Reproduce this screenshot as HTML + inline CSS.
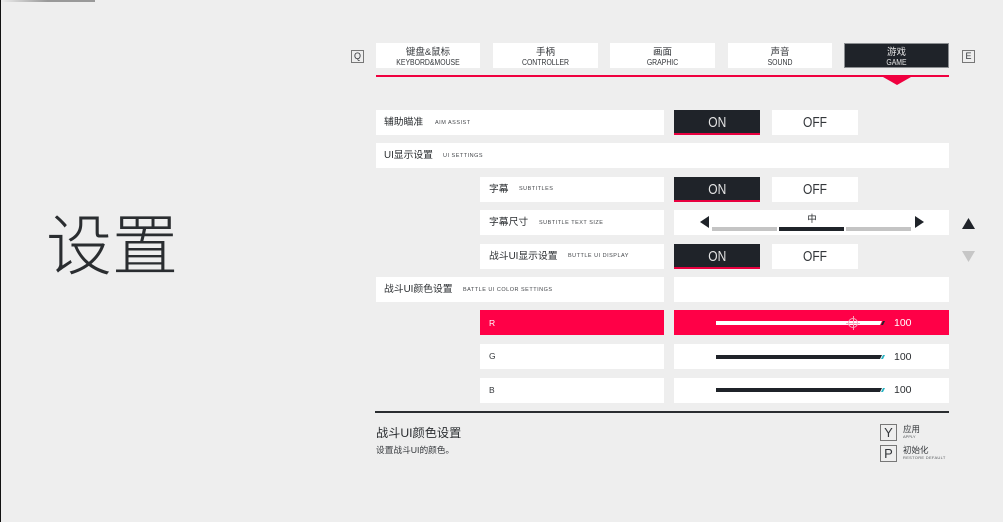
<!DOCTYPE html>
<html><head><meta charset="utf-8"><style>
html,body{margin:0;padding:0}
body{width:1003px;height:522px;background:#eeeeee;overflow:hidden;position:relative;font-family:"Liberation Sans","Noto Sans CJK SC",sans-serif;color:#24272b}
.a{position:absolute}
.w{position:absolute;background:#fff}
.tab{position:absolute;top:43px;height:25px;width:105px;background:#fff;text-align:center}
.tab b{display:block;font-weight:400;font-size:9.5px;line-height:11px;margin-top:4px;color:#33363a}
.tab i{display:block;font-style:normal;font-size:8px;line-height:9px;margin-top:0;color:#33363a;transform:scaleX(.86)}
.tab.sel{background:#1f2329;outline:1px solid #8b8e91;outline-offset:-1px}
.tab.sel b,.tab.sel i{color:#e8e8e8}
.tab.sel b{padding-top:4px;margin-top:0}
.l{position:absolute;font-size:9.8px;line-height:14px;color:#2a2d30;white-space:nowrap;margin-top:1px}
.s{position:absolute;font-size:5.5px;line-height:8px;letter-spacing:.5px;color:#44474b;white-space:nowrap;font-weight:400}
.on,.off{position:absolute;width:86px;height:25px;text-align:center;font-size:15px;line-height:25px}
.on span,.off span{display:inline-block;transform:scaleX(.8)}
.bon{background:#1f2329;color:#e4e4e4;border-bottom:2px solid #e8003f;height:23px;line-height:25px}
.boff{background:#fff;color:#33363a}
.key{position:absolute;box-sizing:border-box;border:1px solid #777;text-align:center;color:#33363a}
.bar{position:absolute;left:716px;width:166px;height:4px;background:#1f2329;clip-path:polygon(0 0,100% 0,calc(100% - 2px) 100%,0 100%)}
.end{position:absolute;left:880px;width:5px;height:4px;background:#28b4c4;clip-path:polygon(60% 0,100% 0,60% 100%,20% 100%)}
.val{position:absolute;left:894px;font-size:10.5px;line-height:14px;color:#2a2d30}
.ch{position:absolute;left:489px;font-size:8.5px;line-height:12px;color:#33363a}
</style></head><body>
<div class="a" style="left:0;top:0;width:95px;height:2px;background:linear-gradient(90deg,#eee,#999 50%,#999)"></div>
<div class="a" style="left:0;top:0;width:1px;height:522px;background:#111"></div>
<div class="a" style="left:46px;top:208px;font-size:66px;line-height:76px;font-weight:300;color:#2a2d30;white-space:nowrap">设置</div>

<div class="key" style="left:351px;top:50px;width:13px;height:13px;font-size:9px;line-height:11px">Q</div>
<div class="tab" style="left:376px;width:104px"><b>键盘&amp;鼠标</b><i>KEYBORD&amp;MOUSE</i></div>
<div class="tab" style="left:493px"><b>手柄</b><i>CONTROLLER</i></div>
<div class="tab" style="left:610px"><b>画面</b><i>GRAPHIC</i></div>
<div class="tab" style="left:728px;width:104px"><b>声音</b><i>SOUND</i></div>
<div class="tab sel" style="left:844px"><b>游戏</b><i>GAME</i></div>
<div class="key" style="left:962px;top:50px;width:13px;height:13px;font-size:9px;line-height:11px">E</div>
<div class="a" style="left:376px;top:75px;width:573px;height:2px;background:#f0003f"></div>
<div class="a" style="left:883px;top:77px;width:28px;height:8px;background:#f0003f;clip-path:polygon(0 0,100% 0,50% 100%)"></div>

<div class="w" style="left:376px;top:110px;width:288px;height:25px"></div>
<div class="l" style="left:384px;top:115px">辅助瞄准</div><div class="s" style="left:435px;top:119px">AIM ASSIST</div>
<div class="on bon" style="left:674px;top:110px"><span>ON</span></div><div class="off boff" style="left:772px;top:110px"><span>OFF</span></div>

<div class="w" style="left:376px;top:143px;width:573px;height:25px"></div>
<div class="l" style="left:384px;top:148px">UI显示设置</div><div class="s" style="left:443px;top:152px">UI SETTINGS</div>

<div class="w" style="left:480px;top:177px;width:184px;height:25px"></div>
<div class="l" style="left:489px;top:182px">字幕</div><div class="s" style="left:519px;top:185px">SUBTITLES</div>
<div class="on bon" style="left:674px;top:177px"><span>ON</span></div><div class="off boff" style="left:772px;top:177px"><span>OFF</span></div>

<div class="w" style="left:480px;top:210px;width:184px;height:25px"></div>
<div class="l" style="left:489px;top:215px">字幕尺寸</div><div class="s" style="left:539px;top:219px">SUBTITLE TEXT SIZE</div>
<div class="w" style="left:674px;top:210px;width:275px;height:25px"></div>
<div class="a" style="left:700px;top:216px;width:9px;height:12px;background:#1f2329;clip-path:polygon(100% 0,100% 100%,0 50%)"></div>
<div class="a" style="left:915px;top:216px;width:9px;height:12px;background:#1f2329;clip-path:polygon(0 0,0 100%,100% 50%)"></div>
<div class="a" style="left:712px;top:227px;width:65px;height:4px;background:#c4c4c4"></div>
<div class="a" style="left:779px;top:227px;width:65px;height:4px;background:#1f2329"></div>
<div class="a" style="left:846px;top:227px;width:65px;height:4px;background:#c4c4c4"></div>
<div class="a" style="left:802px;top:214px;width:20px;text-align:center;font-size:9.5px;line-height:12px;color:#2a2d30">中</div>
<div class="a" style="left:962px;top:218px;width:13px;height:11px;background:#1f2329;clip-path:polygon(50% 0,100% 100%,0 100%)"></div>
<div class="a" style="left:962px;top:251px;width:13px;height:11px;background:#c6c6c6;clip-path:polygon(0 0,100% 0,50% 100%)"></div>

<div class="w" style="left:480px;top:244px;width:184px;height:25px"></div>
<div class="l" style="left:489px;top:249px">战斗UI显示设置</div><div class="s" style="left:568px;top:252px">BUTTLE UI DISPLAY</div>
<div class="on bon" style="left:674px;top:244px"><span>ON</span></div><div class="off boff" style="left:772px;top:244px"><span>OFF</span></div>

<div class="w" style="left:376px;top:277px;width:288px;height:25px"></div>
<div class="l" style="left:384px;top:282px">战斗UI颜色设置</div><div class="s" style="left:463px;top:286px">BATTLE UI COLOR SETTINGS</div>
<div class="w" style="left:674px;top:277px;width:275px;height:25px"></div>

<div class="a" style="left:480px;top:310px;width:184px;height:25px;background:#ff0047"></div>
<div class="ch" style="top:317px;color:#fff">R</div>
<div class="a" style="left:674px;top:310px;width:275px;height:25px;background:#ff0047"></div>
<div class="bar" style="top:321px;background:#fff"></div>
<div class="end" style="top:321px;background:#1f2329"></div>
<div class="a" style="left:848px;top:318px;width:10px;height:10px;box-sizing:border-box;border:1px solid #f4a8bc;border-radius:50%"></div>
<div class="a" style="left:852.5px;top:316px;width:1px;height:14px;background:#f4a8bc"></div>
<div class="a" style="left:846px;top:322.5px;width:14px;height:1px;background:#f4a8bc"></div>
<div class="val" style="top:316px;color:#fff">100</div>

<div class="w" style="left:480px;top:344px;width:184px;height:25px"></div>
<div class="ch" style="top:350px">G</div>
<div class="w" style="left:674px;top:344px;width:275px;height:25px"></div>
<div class="bar" style="top:355px"></div>
<div class="end" style="top:355px"></div>
<div class="val" style="top:350px">100</div>

<div class="w" style="left:480px;top:378px;width:184px;height:25px"></div>
<div class="ch" style="top:384px">B</div>
<div class="w" style="left:674px;top:378px;width:275px;height:25px"></div>
<div class="bar" style="top:388px"></div>
<div class="end" style="top:388px"></div>
<div class="val" style="top:383px">100</div>

<div class="a" style="left:375px;top:411px;width:574px;height:2px;background:#2a2d30"></div>
<div class="a" style="left:376px;top:425px;font-size:12.2px;line-height:17px;white-space:nowrap;color:#2a2d30">战斗UI颜色设置</div>
<div class="a" style="left:376px;top:444px;font-size:8.7px;line-height:13px;white-space:nowrap;color:#33363a">设置战斗UI的颜色。</div>

<div class="key" style="left:880px;top:424px;width:17px;height:17px;font-size:13px;line-height:15px">Y</div>
<div class="a" style="left:903px;top:424px;font-size:8.5px;line-height:11px;white-space:nowrap;color:#33363a">应用</div>
<div class="a" style="left:903px;top:434px;font-size:4px;line-height:6px;white-space:nowrap;color:#55585c">APPLY</div>
<div class="key" style="left:880px;top:445px;width:17px;height:17px;font-size:13px;line-height:15px">P</div>
<div class="a" style="left:903px;top:445px;font-size:8.5px;line-height:11px;white-space:nowrap;color:#33363a">初始化</div>
<div class="a" style="left:903px;top:455px;font-size:4px;line-height:6px;letter-spacing:.3px;white-space:nowrap;color:#55585c">RESTORE DEFAULT</div>
</body></html>
